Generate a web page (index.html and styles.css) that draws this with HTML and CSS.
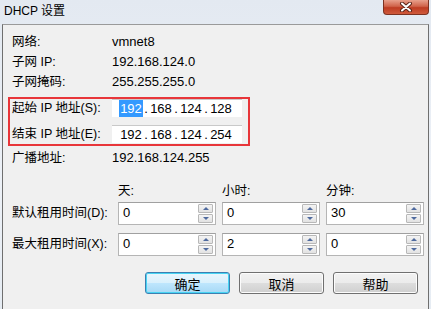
FILE: index.html
```html
<!DOCTYPE html>
<html lang="zh-CN">
<head>
  <meta charset="UTF-8" />
  <title>DHCP 设置</title>
  <link rel="stylesheet" href="styles.css">
</head>
<body>
  <div class="window">
    <div class="titlebar">
      <span class="title">DHCP 设置</span>
      <div class="close-btn">
        <svg width="14" height="10" viewBox="0 0 14 10">
          <path d="M3 1.5 L11 8.5 M11 1.5 L3 8.5" stroke="#5a2418" stroke-width="4" stroke-linecap="round" fill="none"/>
          <path d="M3 1.5 L11 8.5 M11 1.5 L3 8.5" stroke="#fff" stroke-width="2" stroke-linecap="round" fill="none"/>
        </svg>
      </div>
    </div>

    <div class="client">
      <div class="row"><span class="label">网络:</span><span class="value">vmnet8</span></div>
      <div class="row"><span class="label">子网 IP:</span><span class="value">192.168.124.0</span></div>
      <div class="row"><span class="label">子网掩码:</span><span class="value">255.255.255.0</span></div>

      <div class="range">
        <div class="row ip-row">
          <span class="label">起始 IP 地址(S):</span>
          <div class="ip-input">
            <span class="octet"><span class="sel">192</span></span><span class="dot">.</span>
            <span class="octet">168</span><span class="dot">.</span>
            <span class="octet">124</span><span class="dot">.</span>
            <span class="octet">128</span>
          </div>
        </div>
        <div class="row ip-row">
          <span class="label">结束 IP 地址(E):</span>
          <div class="ip-input">
            <span class="octet">192</span><span class="dot">.</span>
            <span class="octet">168</span><span class="dot">.</span>
            <span class="octet">124</span><span class="dot">.</span>
            <span class="octet">254</span>
          </div>
        </div>
      </div>

      <div class="row bcast"><span class="label">广播地址:</span><span class="value">192.168.124.255</span></div>

      <div class="lease">
        <span></span>
        <span class="head">天:</span>
        <span class="head">小时:</span>
        <span class="head">分钟:</span>

        <span class="label">默认租用时间(D):</span>
        <div class="spin"><span class="spin-val">0</span><div class="spin-btns"><span class="sb up"></span><span class="sb down"></span></div></div>
        <div class="spin"><span class="spin-val">0</span><div class="spin-btns"><span class="sb up"></span><span class="sb down"></span></div></div>
        <div class="spin"><span class="spin-val">30</span><div class="spin-btns"><span class="sb up"></span><span class="sb down"></span></div></div>

        <span class="label">最大租用时间(X):</span>
        <div class="spin"><span class="spin-val">0</span><div class="spin-btns"><span class="sb up"></span><span class="sb down"></span></div></div>
        <div class="spin"><span class="spin-val">2</span><div class="spin-btns"><span class="sb up"></span><span class="sb down"></span></div></div>
        <div class="spin"><span class="spin-val">0</span><div class="spin-btns"><span class="sb up"></span><span class="sb down"></span></div></div>
      </div>

      <div class="buttons">
        <button class="btn default">确定</button>
        <button class="btn">取消</button>
        <button class="btn">帮助</button>
      </div>
    </div>
  </div>
</body>
</html>
```

FILE: styles.css
```css
body {
  margin: 0;
  padding: 0;
  background: #e9eef5;
  font-family: "Liberation Sans", "Noto Sans CJK SC", sans-serif;
  font-size: 13px;
  color: #000;
}
.window {
  width: 431px;
  height: 309px;
  background: linear-gradient(#e3e9f1, #edf1f7 60%, #e6ecf3);
  overflow: hidden;
}
.titlebar {
  height: 24px;
  display: flex;
  justify-content: space-between;
  align-items: flex-start;
  padding: 0 2px 0 4px;
}
.title {
  font-size: 12px;
  line-height: 22px;
  color: #000;
}
.close-btn {
  width: 44px;
  height: 14px;
  border: 1px solid #7d3221;
  border-top: none;
  border-radius: 0 0 4px 4px;
  background: linear-gradient(#e8a08c, #d0634a 45%, #be3c22 55%, #cf5a3c);
  display: flex;
  align-items: center;
  justify-content: center;
}
.client {
  margin: 0 2px;
  height: 280px;
  background: #f0f0f0;
  border: 1px solid #6f6f6f;
  border-top-color: #9a9a9a;
  padding: 7px 0 0 9px;
}
.row {
  display: flex;
  align-items: center;
  height: 20px;
  line-height: 20px;
}
.label {
  width: 100px;
  flex: none;
  white-space: nowrap;
  font-size: 12.5px;
}
.value {
  white-space: nowrap;
}
.range {
  width: 234px;
  margin: 5px 0 0 -4px;
  padding: 0 2px 1px 2px;
  border: 2px solid #e8363a;
  display: flex;
  flex-direction: column;
  gap: 8px;
}
.ip-row {
  height: 18px;
}
.ip-input {
  width: 130px;
  height: 18px;
  background: #fff;
  border-top: 1px solid #c9c9c9;
  box-sizing: border-box;
  display: flex;
  align-items: center;
  padding-left: 7px;
}
.octet {
  width: 24px;
  text-align: center;
  line-height: 17px;
}
.dot {
  width: 6px;
  text-align: center;
}
.sel {
  background: #3399ff;
  color: #fff;
  display: inline-block;
  padding: 0 1px;
}
.bcast {
  margin-top: 2px;
}
.lease {
  margin-top: 15px;
  display: grid;
  grid-template-columns: 100px 98px 98px 98px;
  grid-template-rows: 16px 26px 31px;
  column-gap: 6px;
  align-items: end;
}
.lease .head {
  line-height: 16px;
  font-size: 12.5px;
}
.lease .label {
  line-height: 23px;
}
.spin {
  height: 23px;
  box-sizing: border-box;
  background: #fff;
  border: 1px solid #b5b5b5;
  border-top-color: #a0a0a0;
  display: flex;
  justify-content: space-between;
  align-items: center;
  padding: 0 2px 0 4px;
}
.spin-val {
  line-height: 19px;
  align-self: flex-start;
}
.spin-btns {
  display: flex;
  flex-direction: column;
  gap: 1px;
}
.sb {
  width: 15px;
  height: 9px;
  box-sizing: border-box;
  border: 1px solid #b8b8b8;
  border-radius: 1px;
  background: linear-gradient(#f4f4f4, #e2e2e2);
  display: flex;
  align-items: center;
  justify-content: center;
}
.sb::after {
  content: "";
  border-left: 3.5px solid transparent;
  border-right: 3.5px solid transparent;
}
.sb.up::after {
  border-bottom: 3px solid #4f6a9e;
}
.sb.down::after {
  border-top: 3px solid #4f6a9e;
}
.buttons {
  display: flex;
  justify-content: flex-end;
  gap: 9px;
  margin-top: 16px;
  padding-right: 10px;
}
.btn {
  width: 85px;
  height: 22px;
  padding: 0;
  font-family: "Liberation Sans", "Noto Sans CJK SC", sans-serif;
  font-size: 13px;
  color: #000;
  border: 1px solid #707070;
  border-radius: 3px;
  background: linear-gradient(#f2f2f2, #ebebeb 49%, #dddddd 51%, #cfcfcf);
  box-shadow: inset 0 0 0 1px #fcfcfc;
}
.btn.default {
  border-color: #3c7fb1;
  background: linear-gradient(#eaf6fd, #d9f0fc 49%, #bee6fd 51%, #a7d9f5);
  box-shadow: inset 0 0 0 1px #48d4f3;
}
```
